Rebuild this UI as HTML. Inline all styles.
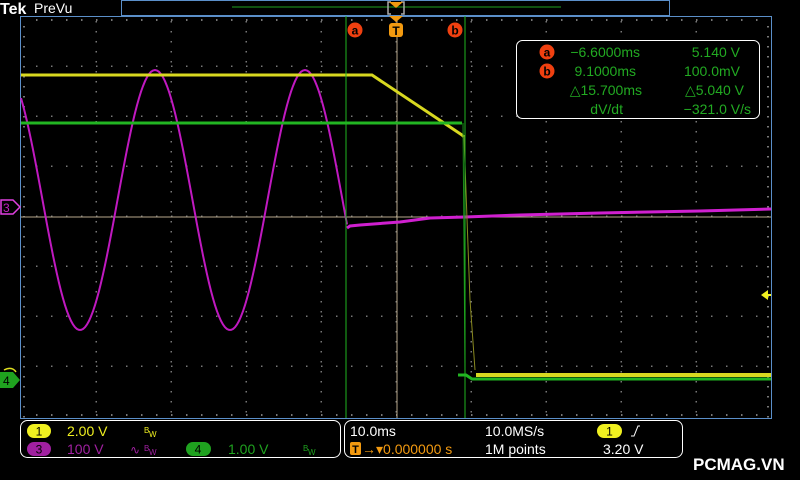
<!DOCTYPE html>
<html><head><meta charset="utf-8"><style>
html,body{margin:0;padding:0;background:#000;width:800px;height:480px;overflow:hidden}
svg{display:block}
text{font-family:"Liberation Sans",sans-serif}
</style></head><body>
<svg id="s" width="800" height="480" viewBox="0 0 800 480" xmlns="http://www.w3.org/2000/svg">
<rect width="800" height="480" fill="#000"/>
<text x="0" y="14" font-size="16" font-weight="bold" fill="#fff" font-family="Liberation Serif">Tek</text>
<text x="34" y="13" font-size="14" fill="#fff">PreVu</text>
<rect x="121.5" y="0.5" width="548" height="15" fill="none" stroke="#5b8fc9" stroke-width="1"/>
<line x1="232" y1="7" x2="561" y2="7" stroke="#1fa21f"/>
<path d="M391 2 h-3 v12 h3 M401 2 h3 v12 h-3" stroke="#aaa" fill="none" stroke-width="1.5"/>
<rect x="20.5" y="16.5" width="751" height="402" fill="none" stroke="#5b8fc9"/>
<g id="grid"></g>
<line x1="21" y1="217" x2="771" y2="217" stroke="#b7a98c"/>
<line x1="397" y1="16" x2="397" y2="418" stroke="#b7a98c"/>
<polyline id="sine" fill="none" stroke="#c019c0" stroke-width="2"/>
<polyline points="347,228 350,226 360,225 400,222 430,218 465,217 520,215 600,213 700,211 771,209" fill="none" stroke="#d020d0" stroke-width="3"/>
<polyline points="21,75 372,75 462,135 464,137" fill="none" stroke="#d8d820" stroke-width="3"/>
<polyline points="464,137 470,300 475,370" fill="none" stroke="#8a8a20" stroke-width="1"/>
<polyline points="476,375 771,375" fill="none" stroke="#d8d820" stroke-width="4"/>
<polyline points="21,123 462,123" fill="none" stroke="#22b522" stroke-width="3"/>
<polyline points="463,123 465,372" fill="none" stroke="#1a8a1a" stroke-width="1"/>
<polyline points="458,375 466,375 472,379 771,379" fill="none" stroke="#22b522" stroke-width="3"/>
<line x1="346" y1="16" x2="346" y2="418" stroke="#1fb51f"/>
<line x1="465" y1="16" x2="465" y2="418" stroke="#1fb51f"/>
<circle cx="355" cy="30" r="7.5" fill="#f04010"/><text x="355" y="34.5" font-size="12" font-weight="bold" text-anchor="middle" fill="#000">a</text>
<circle cx="455" cy="30" r="7.5" fill="#f04010"/><text x="455" y="34.5" font-size="12" font-weight="bold" text-anchor="middle" fill="#000">b</text>
<path d="M389 16 h14 l-7 6z" fill="#f39a10"/>
<rect x="389" y="23" width="14" height="14" rx="3" fill="#f39a10"/><text x="396" y="35" font-size="12" font-weight="bold" text-anchor="middle" fill="#000">T</text>
<path d="M389 2 h14 l-7 6z" fill="#f39a10"/>
<rect x="516.5" y="40.5" width="243" height="78" rx="6" fill="#000" stroke="#fff"/>
<g font-size="14" fill="#22aa22">
<circle cx="547" cy="52" r="7.5" fill="#f04010"/><text x="547" y="56.5" font-size="12" font-weight="bold" text-anchor="middle" fill="#000">a</text>
<circle cx="547" cy="71" r="7.5" fill="#f04010"/><text x="547" y="75.5" font-size="12" font-weight="bold" text-anchor="middle" fill="#000">b</text>
<text x="640" y="57" text-anchor="end">−6.6000ms</text>
<text x="740" y="57" text-anchor="end">5.140 V</text>
<text x="636" y="76" text-anchor="end">9.1000ms</text>
<text x="740" y="76" text-anchor="end">100.0mV</text>
<text x="642" y="95" text-anchor="end">△15.700ms</text>
<text x="744" y="95" text-anchor="end">△5.040 V</text>
<text x="623" y="114" text-anchor="end">dV/dt</text>
<text x="751" y="114" text-anchor="end">−321.0 V/s</text>
</g>
<path d="M1 200 h12 l7 7 l-7 7 h-12z" fill="#000" stroke="#e040e0" stroke-width="1.5"/><text x="3" y="212" font-size="12" fill="#c020c0">3</text>
<path d="M4 370 q8 -4 12 2" stroke="#e0e020" fill="none" stroke-width="1.5"/>
<path d="M0 372 h13 l7 8 l-7 8 h-13z" fill="#1fa21f"/><text x="3" y="385" font-size="12" fill="#000">4</text>
<path d="M761 295 l7 -5 v4 h3 v2 h-3 v4z" fill="#f0f020"/>
<rect x="20.5" y="420.5" width="320" height="37" rx="7" fill="none" stroke="#fff"/>
<g font-size="14">
<rect x="27" y="424" width="24" height="14" rx="7" fill="#f0f020"/><text x="39" y="435.5" text-anchor="middle" font-size="12" fill="#000">1</text>
<text x="67" y="436" fill="#f0f020">2.00 V</text>
<text x="144" y="433" font-size="8" fill="#f0f020">B</text><text x="149" y="437" font-size="8" fill="#f0f020">W</text>
<rect x="27" y="442" width="24" height="14" rx="7" fill="#a020a0"/><text x="39" y="453.5" text-anchor="middle" font-size="12" fill="#000">3</text>
<text x="67" y="454" fill="#a020a0">100 V</text>
<text x="130" y="454" font-size="12" fill="#a020a0">∿</text><text x="144" y="451" font-size="8" fill="#a020a0">B</text><text x="149" y="455" font-size="8" fill="#a020a0">W</text>
<rect x="186" y="442" width="25" height="14" rx="7" fill="#1fa21f"/><text x="198" y="453.5" text-anchor="middle" font-size="12" fill="#000">4</text>
<text x="228" y="454" fill="#1fa21f">1.00 V</text>
<text x="303" y="451" font-size="8" fill="#1fa21f">B</text><text x="308" y="455" font-size="8" fill="#1fa21f">W</text>
</g>
<rect x="344.5" y="420.5" width="338" height="37" rx="7" fill="none" stroke="#fff"/>
<g font-size="14" fill="#fff">
<text x="350" y="436">10.0ms</text>
<rect x="350" y="442" width="11" height="13" rx="2" fill="#f39a10"/><text x="355.5" y="453" font-size="11" font-weight="bold" text-anchor="middle" fill="#000">T</text>
<text x="362" y="454" fill="#f39a10">→▾0.000000 s</text>
<text x="485" y="436">10.0MS/s</text>
<text x="485" y="454">1M points</text>
<rect x="597" y="424" width="25" height="14" rx="7" fill="#f0f020"/><text x="609.5" y="435.5" text-anchor="middle" font-size="12" fill="#000">1</text>
<path d="M631 436 h3 l4 -10 h2" stroke="#fff" fill="none"/>
<text x="603" y="454">3.20 V</text>
</g>
<text x="693" y="470" font-size="17" font-weight="bold" fill="#fff">PCMAG.VN</text>
</svg>
<script>
var g=document.getElementById("grid"),h="";
for(var i=1;i<10;i++){var x=21+75*i;for(var y=21;y<418;y+=10)h+='<rect x="'+(x-0.5)+'" y="'+y+'" width="1.5" height="1.5" fill="#777"/>';}
for(var j=1;j<8;j++){var y=16+50*j;for(var x=36;x<771;x+=15)h+='<rect x="'+x+'" y="'+(y-0.5)+'" width="1.5" height="1.5" fill="#777"/>';}
for(var x=36;x<771;x+=15){h+='<rect x="'+x+'" y="414" width="1.5" height="2" fill="#777"/><rect x="'+x+'" y="19" width="1.5" height="2" fill="#777"/>';}
for(var y=26;y<418;y+=10){h+='<rect x="23" y="'+y+'" width="2" height="1.5" fill="#777"/><rect x="767" y="'+y+'" width="2" height="1.5" fill="#777"/>';}
g.innerHTML=h;
var p=[];for(var x=21;x<=347;x+=2){p.push(x+","+(200-130*Math.cos(2*Math.PI*(x-155)/150)).toFixed(1));}
document.getElementById("sine").setAttribute("points",p.join(" "));
</script>
</body></html>
